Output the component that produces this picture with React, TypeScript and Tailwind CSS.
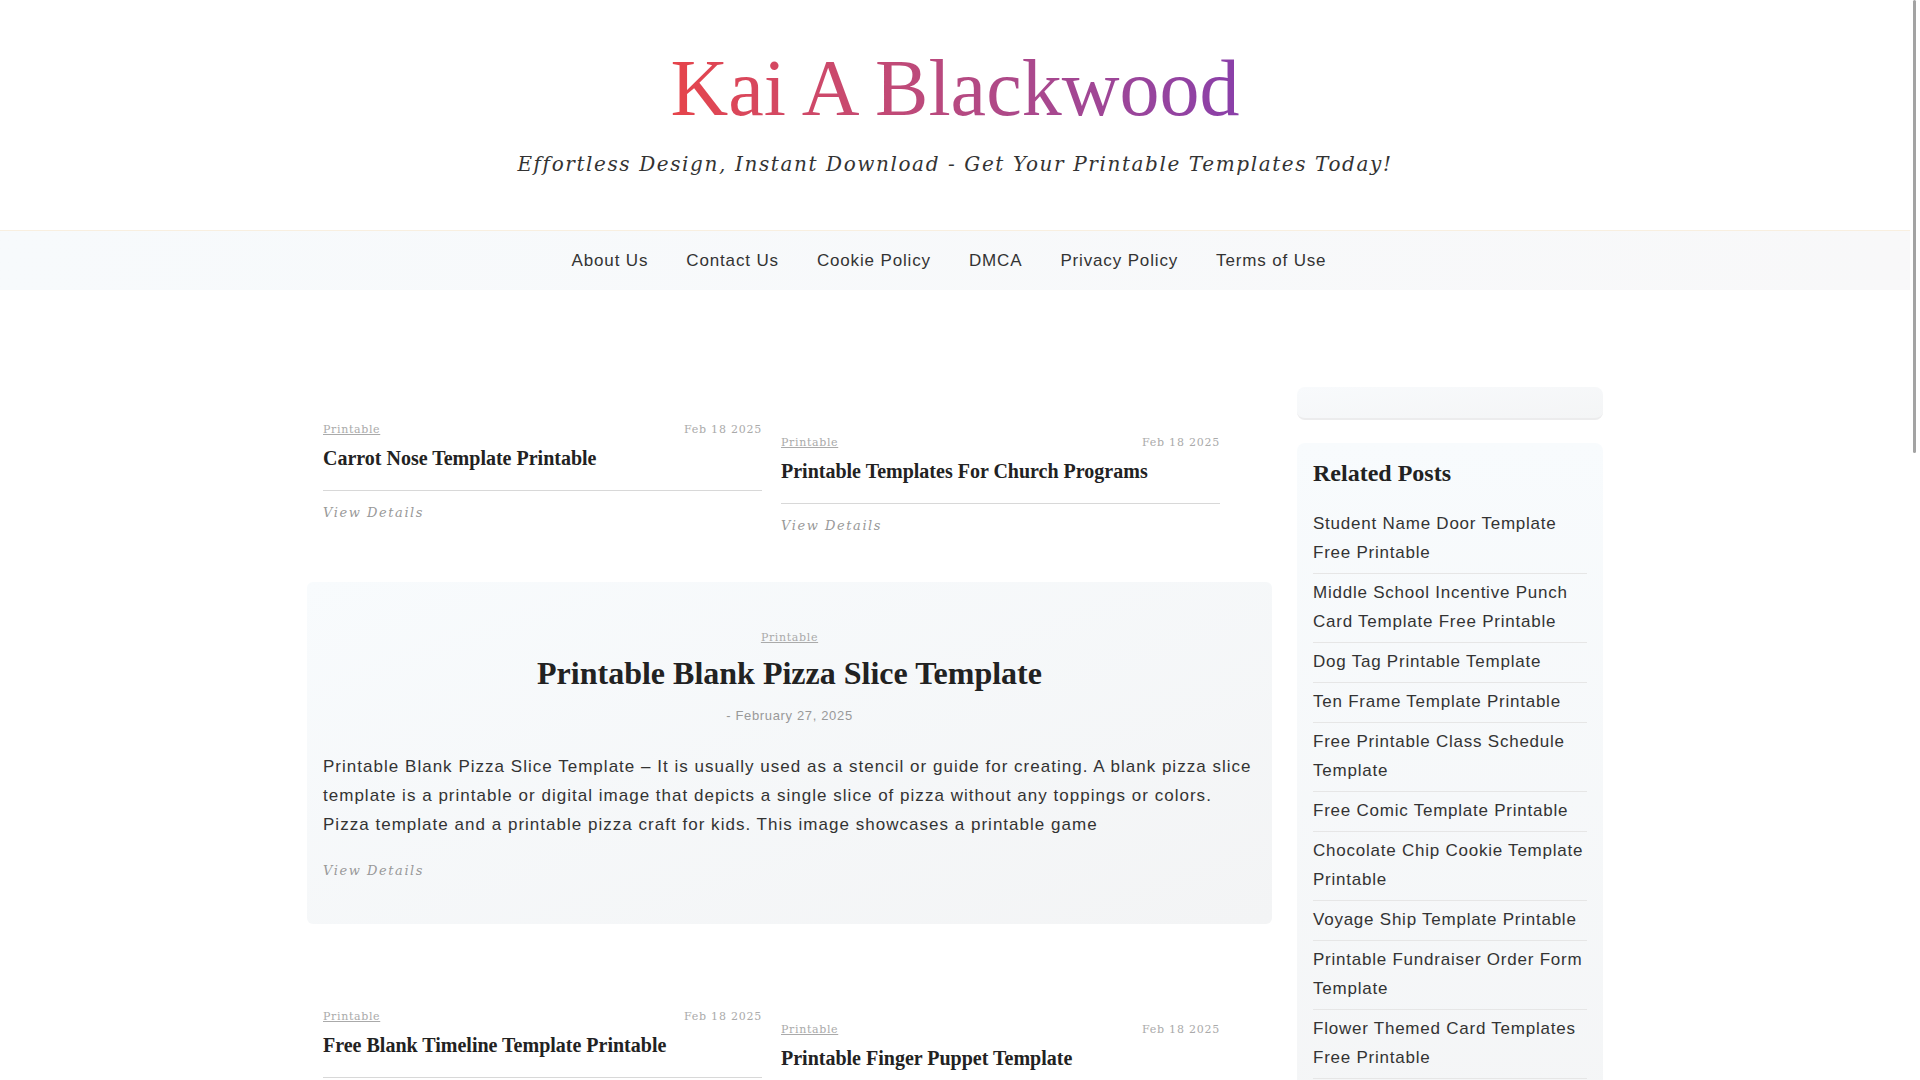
const NAV = ['About Us', 'Contact Us', 'Cookie Policy', 'DMCA', 'Privacy Policy', 'Terms of Use'];

const RELATED = [
  'Student Name Door Template Free Printable',
  'Middle School Incentive Punch Card Template Free Printable',
  'Dog Tag Printable Template',
  'Ten Frame Template Printable',
  'Free Printable Class Schedule Template',
  'Free Comic Template Printable',
  'Chocolate Chip Cookie Template Printable',
  'Voyage Ship Template Printable',
  'Printable Fundraiser Order Form Template',
  'Flower Themed Card Templates Free Printable',
  'Printable Bookmark Templates Free',
];

const BLOCKS = [
  {
    cards: ['Carrot Nose Template Printable', 'Printable Templates For Church Programs'],
    featured: {
      title: 'Printable Blank Pizza Slice Template',
      date: '- February 27, 2025',
      excerpt:
        'Printable Blank Pizza Slice Template – It is usually used as a stencil or guide for creating. A blank pizza slice template is a printable or digital image that depicts a single slice of pizza without any toppings or colors. Pizza template and a printable pizza craft for kids. This image showcases a printable game',
    },
  },
  {
    cards: ['Free Blank Timeline Template Printable', 'Printable Finger Puppet Template'],
    featured: {
      title: 'Printable Bookmark Templates Free',
      date: '- February 26, 2025',
      excerpt:
        'Printable Bookmark Templates Free – A bookmark template is a ready made layout that you can print, cut out and decorate. These free printable bookmark templates come in many styles, from simple blank strips to colorful designs for kids and readers of every age',
    },
  },
  {
    cards: ['Printable Gift Tag Template', 'Free Printable Recipe Card Template'],
    featured: null,
  },
];

function PostCard({ title, offset }: { title: string; offset?: boolean }) {
  return (
    <article className={`w-[439px] ${offset ? 'mt-[13px]' : ''}`}>
      <div className="flex h-[16px] items-center justify-between font-['DejaVu_Serif',serif] text-[11px] tracking-[0.06em] text-[#aaa]">
        <a href="#" className="underline">Printable</a>
        <span className="tracking-[0.07em]">Feb 18 2025</span>
      </div>
      <h2 className="mt-[6px] font-['Liberation_Serif',serif] text-[20px] font-bold leading-[28px] text-[#222]">
        {title}
      </h2>
      <div className="mt-[18px] border-t border-[#d8d8d8]" />
      <a href="#" className="mt-[11px] block font-['DejaVu_Serif',serif] text-[13px] italic leading-[22px] tracking-[0.12em] text-[#999]">
        View Details
      </a>
    </article>
  );
}

function Featured({ title, date, excerpt }: { title: string; date: string; excerpt: string }) {
  return (
    <section className="mt-[45px] rounded-md bg-gradient-to-br from-[#f8fbfd] to-[#f3f4f5] px-[16px] pb-[42px] pt-[42px]">
      <div className="text-center">
        <a href="#" className="font-['DejaVu_Serif',serif] text-[11px] leading-[16px] tracking-[0.06em] text-[#aaa] underline">
          Printable
        </a>
      </div>
      <h2 className="mt-[5px] text-center font-['Liberation_Serif',serif] text-[32px] font-bold leading-[40px] text-[#222]">
        {title}
      </h2>
      <p className="mt-[13px] text-center text-[13px] leading-[20px] tracking-[0.05em] text-[#999]">{date}</p>
      <p className="mt-[26px] text-[17px] leading-[29px] tracking-[0.06em] text-[#333]">{excerpt}</p>
      <a href="#" className="mt-[21px] block font-['DejaVu_Serif',serif] text-[13px] italic leading-[22px] tracking-[0.12em] text-[#999]">
        View Details
      </a>
    </section>
  );
}

export default function App() {
  return (
    <div className="min-h-screen bg-white pr-[10px] font-['Liberation_Sans',Arial,sans-serif] text-[#333]">
      {/* page scrollbar as it shows in the capture */}
      <div className="fixed right-0 top-0 z-10 h-screen w-[10px] bg-white">
        <div className="ml-[3px] h-[453px] w-[3px] rounded-full bg-[#a3a3a3]" />
      </div>

      <header className="pb-[51px] pt-[48px] text-center">
        <h1 className="inline-block bg-gradient-to-r from-[#e6444a] to-[#8a3fa9] bg-clip-text font-['Liberation_Serif',serif] text-[80px] leading-[80px] text-transparent">
          Kai A Blackwood
        </h1>
        <p className="mt-[21px] font-['DejaVu_Serif',serif] text-[20px] italic leading-[30px] tracking-[0.08em] text-[#333]">
          Effortless Design, Instant Download - Get Your Printable Templates Today!
        </p>
      </header>

      <nav className="flex h-[60px] items-center justify-center border-t border-[#f8efe0] bg-gradient-to-r from-[#f7fafc] to-[#f8f8f9]">
        <ul className="flex pr-[12px]">
          {NAV.map((item) => (
            <li key={item}>
              <a href="#" className="px-[19px] text-[17px] tracking-[0.05em] text-[#333]">
                {item}
              </a>
            </li>
          ))}
        </ul>
      </nav>

      <main className="mx-auto flex w-[1296px] items-start gap-[25px]">
        <div className="w-[965px] pt-[132px]">
          {BLOCKS.map((block, i) => (
            <div key={i} className={i > 0 ? 'mt-[85px]' : ''}>
              <div className="flex items-start gap-[19px] pl-[16px]">
                <PostCard title={block.cards[0]} />
                <PostCard title={block.cards[1]} offset />
              </div>
              {block.featured && <Featured {...block.featured} />}
            </div>
          ))}

          <div className="mt-[70px] flex justify-center gap-[8px] text-[15px]">
            <span className="flex h-[36px] w-[36px] items-center justify-center rounded-md bg-[#333] text-white">1</span>
            <a href="#" className="flex h-[36px] w-[36px] items-center justify-center rounded-md bg-[#f4f5f6] text-[#333]">2</a>
            <a href="#" className="flex h-[36px] w-[36px] items-center justify-center rounded-md bg-[#f4f5f6] text-[#333]">3</a>
            <a href="#" className="flex h-[36px] items-center justify-center rounded-md bg-[#f4f5f6] px-[14px] text-[#333]">Next</a>
          </div>
        </div>

        <aside className="w-[306px] pt-[97px]">
          <div className="h-[33px] rounded-lg border-b-2 border-[#ececed] bg-gradient-to-br from-[#f8fafc] to-[#f4f5f6]" />
          <div className="mt-[23px] rounded-lg bg-gradient-to-b from-[#f8fbfd] to-[#f4f5f6] px-[16px] pb-[16px] pt-[14px]">
            <h3 className="font-['Liberation_Serif',serif] text-[24px] font-bold leading-[32px] text-[#222]">
              Related Posts
            </h3>
            <ul className="mt-[16px]">
              {RELATED.map((title) => (
                <li key={title} className="border-b border-[#e6e6e6] pb-[6px] pt-[4px] last:border-b-0">
                  <a href="#" className="text-[17px] leading-[29px] tracking-[0.045em] text-[#333]">
                    {title}
                  </a>
                </li>
              ))}
            </ul>
          </div>
        </aside>
      </main>

      <footer className="mt-[90px] border-t border-[#eee] bg-gradient-to-r from-[#f7fafc] to-[#f8f8f9] py-[40px] text-center text-[15px] tracking-[0.05em] text-[#777]">
        Copyright © 2025 Kai A Blackwood
      </footer>
    </div>
  );
}
